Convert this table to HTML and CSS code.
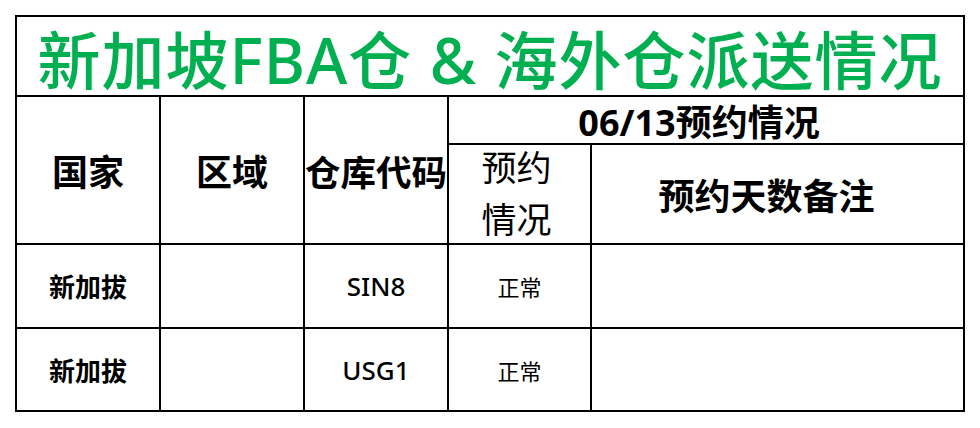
FILE: index.html
```html
<!DOCTYPE html>
<html lang="zh-CN">
<head>
<meta charset="utf-8">
<title>新加坡FBA仓 &amp; 海外仓派送情况</title>
<link rel="stylesheet" href="styles.css">
</head>
<body>
<div class="sheet">
  <div class="cell title">新加坡FBA仓 &amp; 海外仓派送情况</div>
  <div class="cell head span-rows c1">国家</div>
  <div class="cell head span-rows c2">区域</div>
  <div class="cell head span-rows c3 tight">仓库代码</div>
  <div class="cell head date">06/13预约情况</div>
  <div class="cell sub">预约<br>情况</div>
  <div class="cell head note">预约天数备注</div>

  <div class="cell data">新加拔</div>
  <div class="cell"></div>
  <div class="cell code">SIN8</div>
  <div class="cell status">正常</div>
  <div class="cell"></div>

  <div class="cell data">新加拔</div>
  <div class="cell"></div>
  <div class="cell code">USG1</div>
  <div class="cell status">正常</div>
  <div class="cell"></div>
</div>
</body>
</html>
```

FILE: styles.css
```css
html, body {
  margin: 0;
  padding: 0;
  background: #ffffff;
}

body {
  font-family: "Noto Sans", "Noto Sans CJK SC", sans-serif;
  color: #000000;
}

.sheet {
  margin: 15px 0 0 15px;
  width: 950px;
  box-sizing: border-box;
  display: grid;
  grid-template-columns: 142px 142px 142px 141px 371px;
  grid-template-rows: 78px 46px 98px 82px 81px;
  gap: 2px;
  padding: 2px;
  background: #000000;
}

.cell {
  background: #ffffff;
  display: flex;
  align-items: center;
  justify-content: center;
  text-align: center;
  white-space: nowrap;
}

.title {
  grid-column: 1 / 6;
  color: #00b050;
  font-size: 63px;
  font-weight: 500;
  letter-spacing: 1px;
}

.head {
  font-size: 36px;
  font-weight: 700;
}

.span-rows {
  grid-row: 2 / 4;
}

.c1 { grid-column: 1; }
.c2 { grid-column: 2; }
.c3 { grid-column: 3; }

.tight {
  font-size: 35.5px;
}

.date {
  grid-column: 4 / 6;
  grid-row: 2;
  padding-right: 14px;
}

.sub {
  grid-column: 4;
  grid-row: 3;
  font-size: 35px;
  font-weight: 400;
  line-height: 52px;
  padding-right: 6px;
}

.note {
  grid-column: 5;
  grid-row: 3;
  padding-right: 22px;
}

.data {
  font-size: 26px;
  font-weight: 700;
}

.code {
  font-size: 26px;
  font-weight: 500;
}

.status {
  font-size: 22px;
  font-weight: 400;
}
```
